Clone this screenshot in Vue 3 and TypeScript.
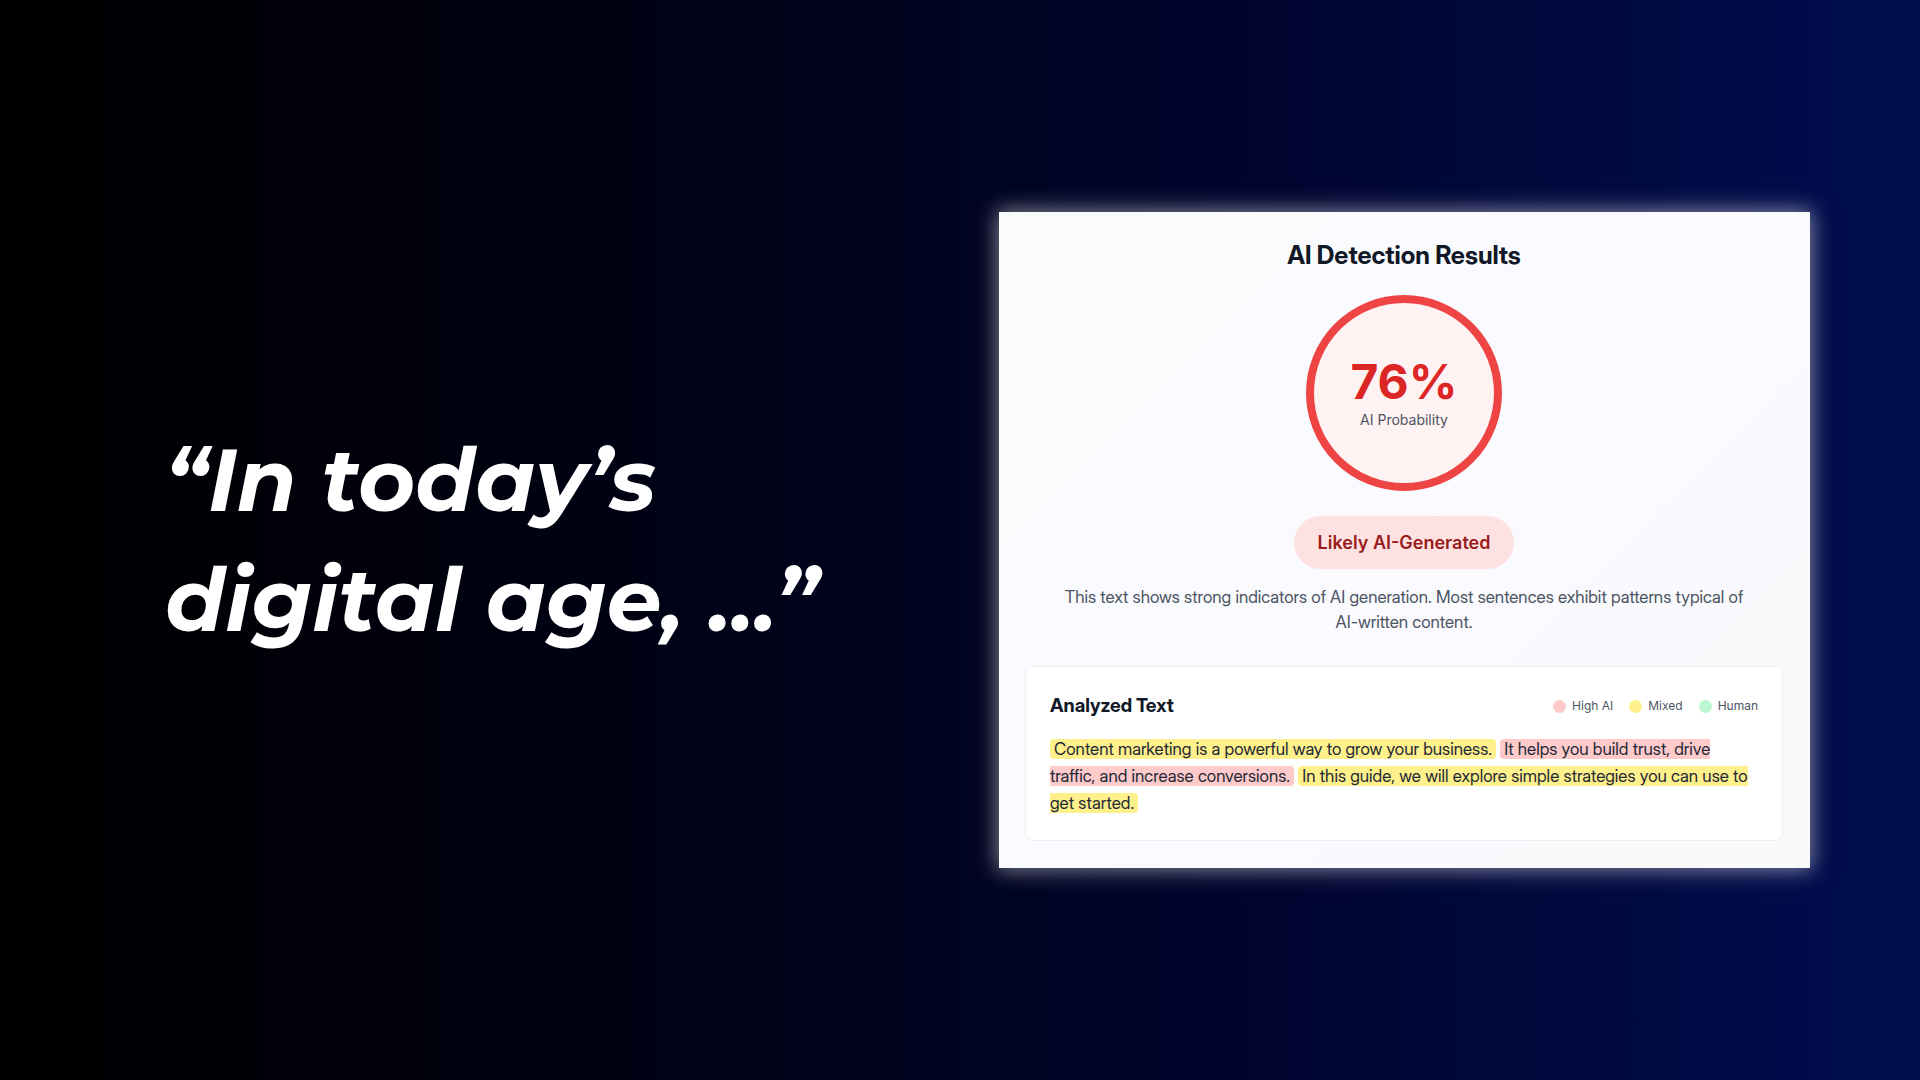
<script setup lang="ts">
type Level = 'high' | 'mixed' | 'human'

interface Sentence {
  level: Level
  text: string
}

const legend: { level: Level; label: string }[] = [
  { level: 'high', label: 'High AI' },
  { level: 'mixed', label: 'Mixed' },
  { level: 'human', label: 'Human' },
]

const sentences: Sentence[] = [
  { level: 'mixed', text: 'Content marketing is a powerful way to grow your business.' },
  { level: 'high', text: 'It helps you build trust, drive traffic, and increase conversions.' },
  { level: 'mixed', text: 'In this guide, we will explore simple strategies you can use to get started.' },
]
</script>

<template>
  <main class="slide">
    <h1 class="quote">“In today’s<br />digital age, ...”</h1>

    <section class="results" aria-labelledby="results-title">
      <h2 id="results-title" class="results-title">AI Detection Results</h2>

      <div class="score">
        <span class="score-value">76%</span>
        <span class="score-label">AI Probability</span>
      </div>

      <p class="verdict">Likely AI-Generated</p>
      <p class="summary">
        This text shows strong indicators of AI generation. Most sentences exhibit patterns typical
        of AI-written content.
      </p>

      <article class="analysis">
        <header class="analysis-head">
          <h3 class="analysis-title">Analyzed Text</h3>
          <ul class="legend">
            <li v-for="item in legend" :key="item.level" class="legend-item">
              <span class="dot" :class="item.level"></span>{{ item.label }}
            </li>
          </ul>
        </header>
        <p class="analysis-text">
          <template v-for="(s, i) in sentences" :key="i"
            ><mark class="sentence" :class="s.level">{{ s.text }}</mark
            >{{ ' ' }}</template
          >
        </p>
      </article>
    </section>
  </main>
</template>

<style>
body {
  margin: 0;
  background: #000;
}
</style>

<style scoped>
.slide {
  box-sizing: border-box;
  min-height: 100vh;
  display: grid;
  grid-template-columns: minmax(0, 1fr) minmax(0, 811px);
  align-items: center;
  column-gap: 64px;
  padding: 0 110px 0 165px;
  background: linear-gradient(90deg, #000 0%, #000218 40%, #000633 70%, #000e50 100%);
  font-family: Inter, 'Liberation Sans', sans-serif;
}

.quote {
  margin: 0;
  color: #fff;
  font-family: Montserrat, Inter, sans-serif;
  font-size: 87px;
  font-style: italic;
  font-weight: 700;
  line-height: 120px;
}

.results {
  display: flex;
  flex-direction: column;
  align-items: center;
  padding: 24px 27px 27px 26px;
  background: linear-gradient(135deg, #f9fbfb, #fafaff 50%, #fafafc);
  box-shadow: 0 0 20px 2px rgba(255, 255, 255, 0.5);
}

.results-title {
  margin: 0 0 21px;
  color: #111827;
  font-family: 'Inter Display', Inter, sans-serif;
  font-size: 25px;
  font-weight: 700;
  line-height: 38px;
}

.score {
  box-sizing: border-box;
  width: 196px;
  height: 196px;
  display: flex;
  flex-direction: column;
  align-items: center;
  justify-content: center;
  gap: 3px;
  border: 8px solid #ef4444;
  border-radius: 50%;
  background: #fef2f2;
}

.score-value {
  color: #dc2626;
  font-size: 48px;
  font-weight: 700;
  line-height: 50px;
}

.score-label {
  color: #4b5563;
  font-size: 14px;
  line-height: 20px;
}

.verdict {
  margin: 25px 0 16px;
  padding: 0 24px;
  border-radius: 27px;
  background: #fee2e2;
  color: #991b1b;
  font-size: 18px;
  font-weight: 600;
  line-height: 53px;
}

.summary {
  max-width: 690px;
  margin: 0 0 31px;
  color: #4b5563;
  font-family: 'Inter Display', Inter, sans-serif;
  font-size: 17px;
  line-height: 25px;
  text-align: center;
}

.analysis {
  box-sizing: border-box;
  width: 100%;
  padding: 24px 24px 23px;
  border: 1px solid #eceef1;
  border-radius: 8px;
  background: #fff;
}

.analysis-head {
  display: flex;
  align-items: center;
  justify-content: space-between;
  margin-bottom: 15px;
}

.analysis-title {
  margin: 0;
  color: #111827;
  font-family: 'Inter Display', Inter, sans-serif;
  font-size: 19px;
  font-weight: 700;
  line-height: 30px;
}

.legend {
  display: flex;
  gap: 16px;
  margin: 0;
  padding: 0;
  list-style: none;
  color: #4b5563;
  font-size: 12px;
  line-height: 18px;
}

.legend-item {
  display: flex;
  align-items: center;
  gap: 6px;
}

.dot {
  width: 13px;
  height: 13px;
  border-radius: 50%;
}

.analysis-text {
  margin: 0;
  color: #1f2937;
  font-family: 'Inter Display', Inter, sans-serif;
  font-size: 17px;
  line-height: 27px;
}

.sentence {
  padding: 0 4px;
  border-radius: 4px;
  color: inherit;
}

.high {
  background: #fecaca;
}

.mixed {
  background: #fef08a;
}

.human {
  background: #bbf7d0;
}
</style>
